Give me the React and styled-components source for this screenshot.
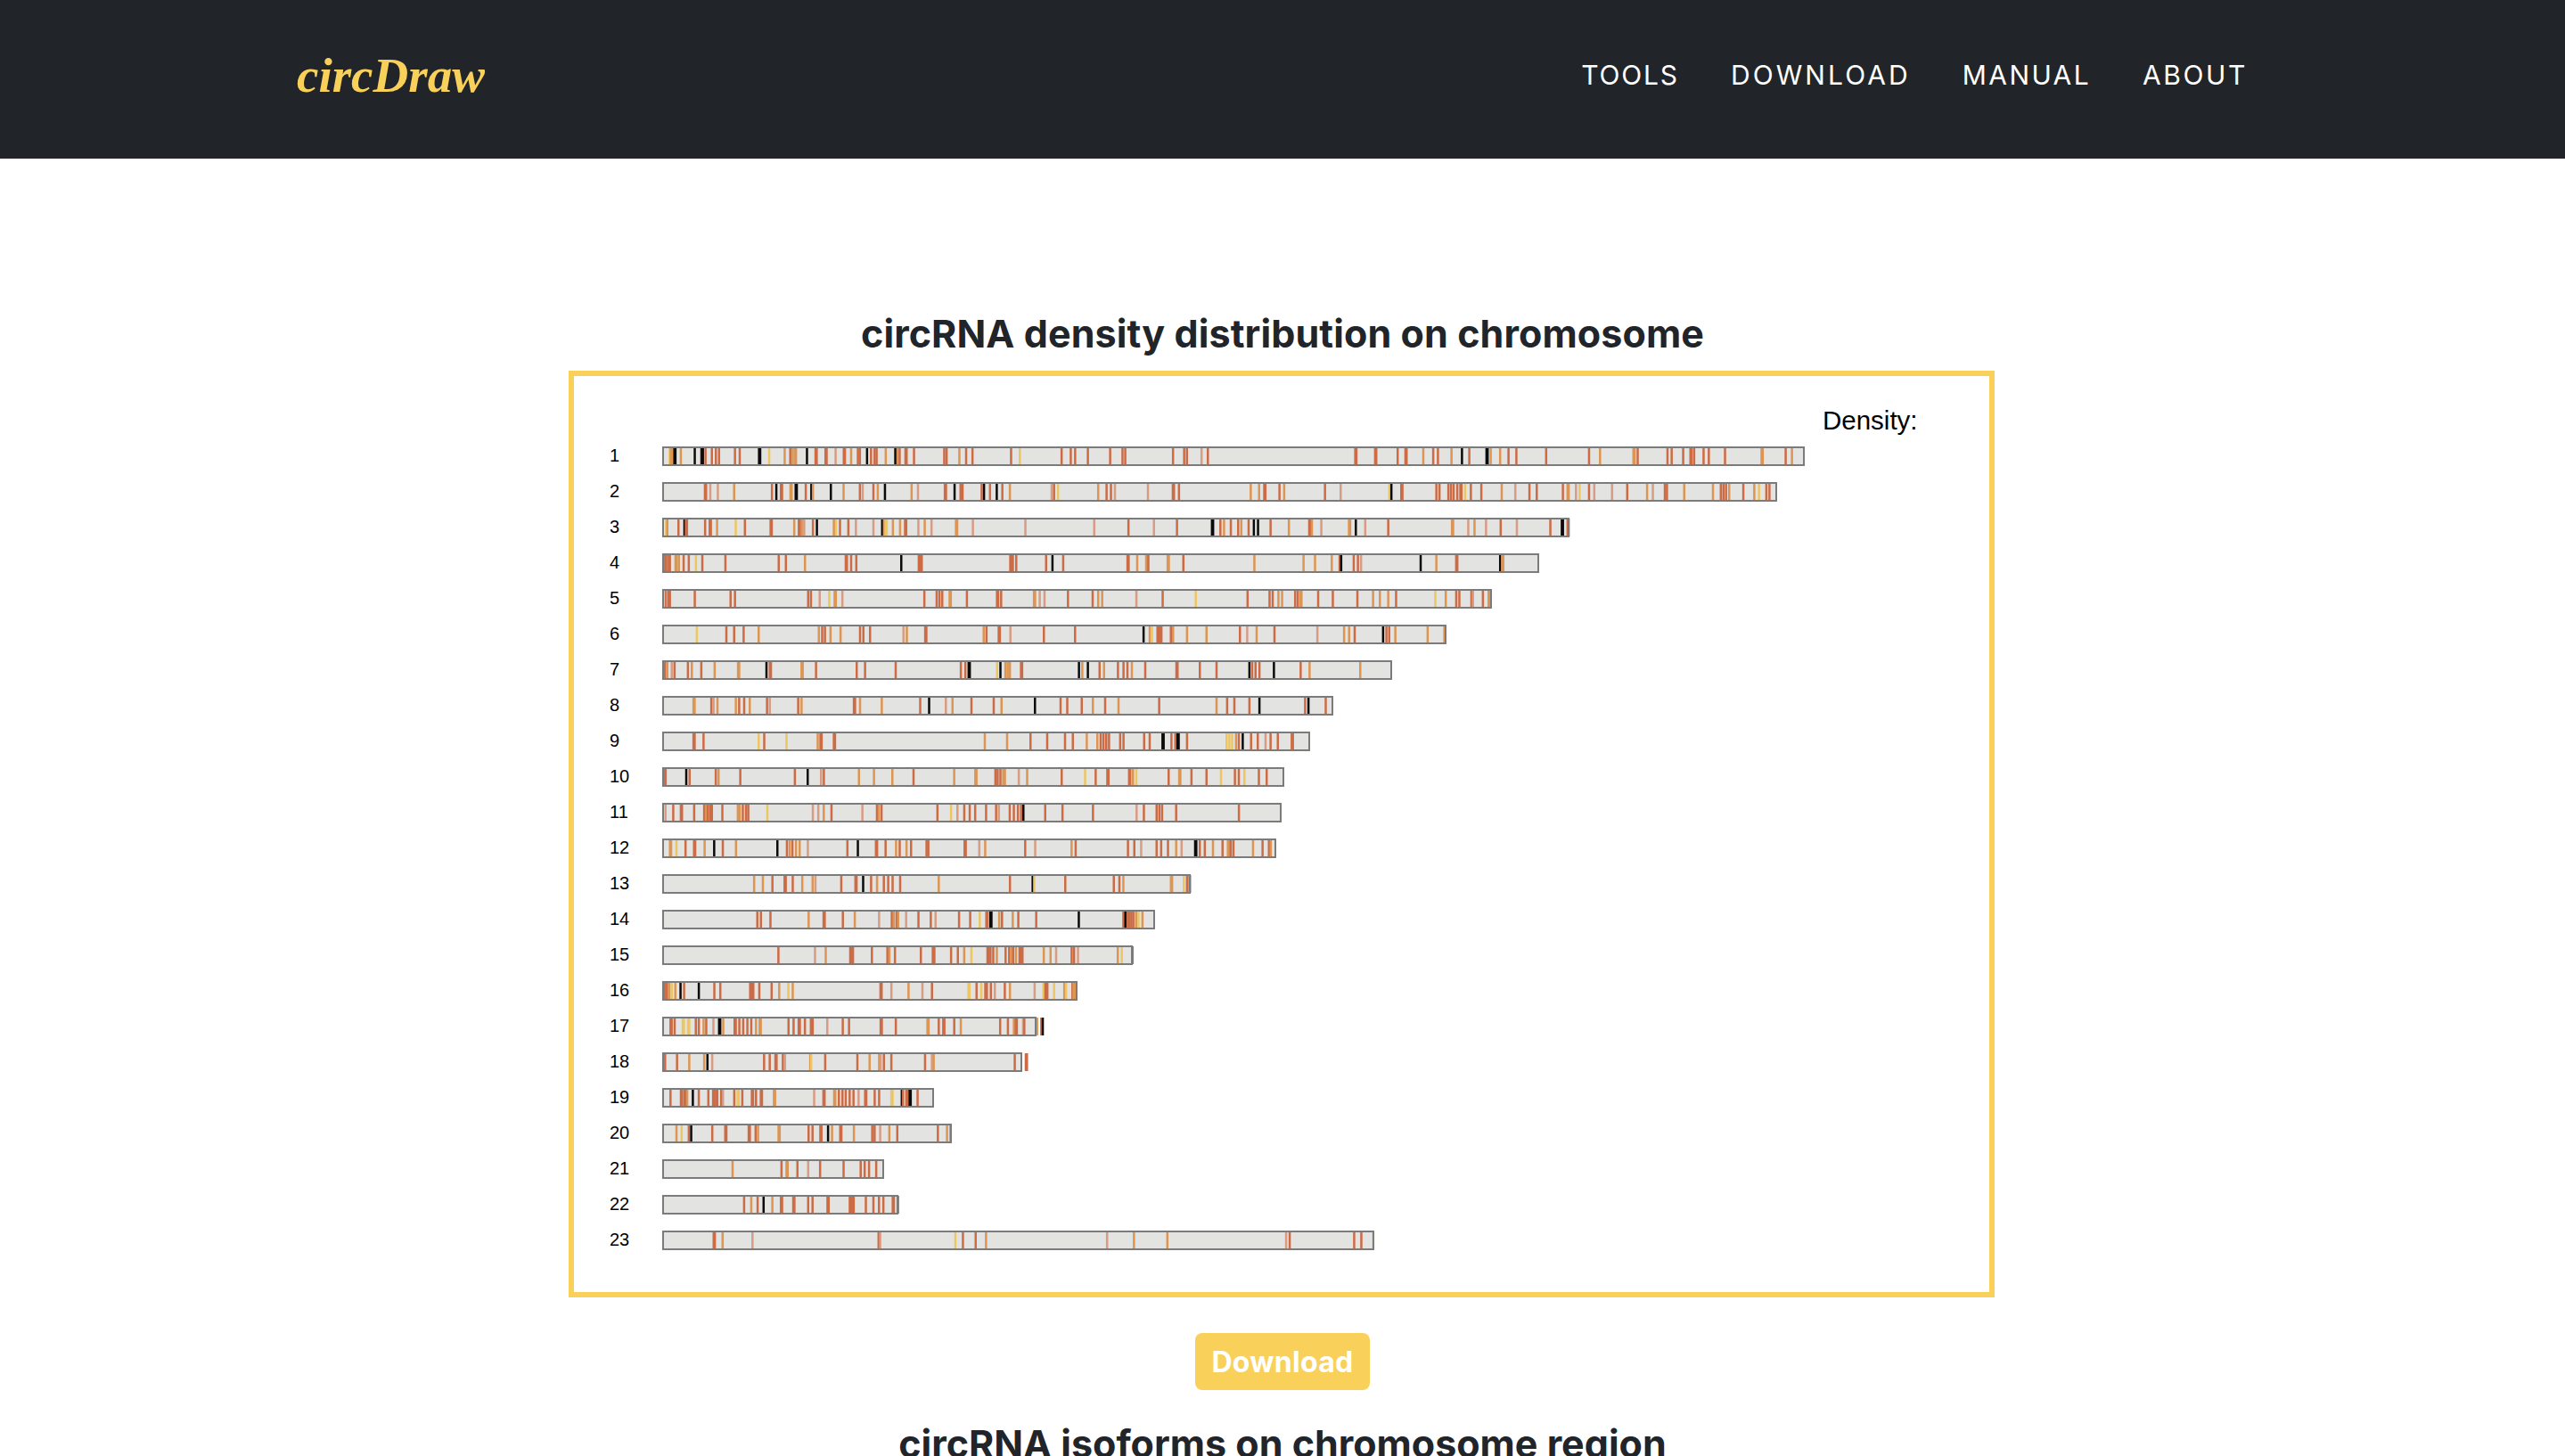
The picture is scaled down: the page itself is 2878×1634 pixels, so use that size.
import React from "react";
import styled, { createGlobalStyle } from "styled-components";

const GlobalStyle = createGlobalStyle`
  html, body { margin: 0; padding: 0; background: #fff; overflow: hidden; height: 100%; }
  #root { height: 100%; }
`;
const Navbar = styled.header`
  height: 178px; box-sizing: border-box; background: #212529;
  display: flex; align-items: center; justify-content: space-between;
  padding: 0 356px 10px 333px;
`;
const Logo = styled.a`
  font-family: "Liberation Serif", serif; font-style: italic; font-weight: 700;
  font-size: 55px; line-height: 1; color: #f9d15a;
`;
const NavLinks = styled.nav`display: flex; gap: 58px;`;
const NavLink = styled.a`
  font-family: "Inter", sans-serif; font-size: 30px; font-weight: 400;
  letter-spacing: ${(p) => p.$track}px; color: #fff; line-height: 36px;
`;
const Main = styled.main`
  display: flex; flex-direction: column; align-items: center; padding-top: 170px;
`;
const SectionTitle = styled.h2`
  margin: 0; font-family: "Inter", sans-serif; font-weight: 700; font-size: 43px;
  letter-spacing: 0.1px; line-height: 52px; color: #212529; text-align: center;
`;
const ChartFrame = styled.section`
  width: 1600px; height: 1040px; box-sizing: border-box; border: 6px solid #f9d15a;
  margin-top: 16px; transform: translateX(-1px);
`;
const ChartSvg = styled.svg`display: block; width: 1588px; height: 1028px;`;
const ChromBar = styled.rect`fill: #e3e3e1;`;
const ChromOutline = styled.rect`fill: none; stroke: #7b7b7b; stroke-width: 2;`;
const COLORS = { r: "#cd6b45", o: "#dd9553", y: "#edc664", k: "#0a0a0a", p: "#d89c84" };
const Tick = styled.rect`fill: ${(p) => COLORS[p.$kind]};`;
const ChromLabel = styled.text`
  font-family: "Liberation Sans", Arial, sans-serif; font-size: 20px; fill: #000;
`;
const LegendLabel = styled.text`
  font-family: "Liberation Sans", Arial, sans-serif; font-size: 29.5px; fill: #000;
`;
const DownloadButton = styled.button`
  margin-top: 40px; width: 196px; height: 64px; border: 0; border-radius: 8px;
  background: #f9d15a; color: #fff; font-family: "Inter", sans-serif;
  font-weight: 700; font-size: 32px; letter-spacing: 0.3px; padding: 0;
`;
const SecondTitle = styled(SectionTitle)`margin-top: 34px; letter-spacing: 0;`;

const Z3 = [630, 2.24], Z4 = [1330, 1568 / 920], Z8 = [660, 1.6], Z9 = [660, 1.96],
  Z10 = [660, 2.24], Z11 = [660, 2.99], Z5 = [630, 2.24], Z6 = [1200, 1568 / 1050];

// ticks: colour letter + position in the crop; upper case letter = wide stroke
const ROWS = [
  [2025, [Z3, "y272 O276 K285 o300 k335 r351 K354 r362 r378 r388 r396 r436 r448 K498 y522 o561 r575 o581 O588 k617 R640 R665 p689 R711 o728 r745 r750 k768 r778 r787 r792 o815 k839 o845 r850 R866 r886 r962 r968 o1000 r1017 r1033 r1130 y1152 r1257 r1280 r1291 r1323 r1379 r1410 r1417 r1537 r1565"],
    [Z4, "r3 p31 r43 R326 R364 r406 R422 o455 r474 r483 o509 k529 r543 K577 o584 o602 r618 r633 r690 r772 o793 O858 r865 r922 r930 r952 R967 r973 r991 r1001 r1032 O1103 r1148 o1160"]],
  [1994, [Z3, "R362 p374 p393 o434 r529 k540 R553 O577 K590 r614 k628 o632 k677 o709 r750 p757 r784 o795 k813 o880 p896 R965 k988 r1003 r1008 r1056 k1062 r1077 k1094 r1108 o1127 p1232 r1238 y1248 o1349 r1370 r1381 p1391 p1474 R1538 r1552"],
    [Z4, "o125 o141 R152 r180 o189 r267 p297 y390 k394 R414 r480 r486 r503 r508 r513 r520 R527 y535 r546 r566 o605 p631 r658 r672 r722 O732 p747 y754 r772 p782 p816 r845 o883 p894 r917 r921 o954 o1009 r1024 r1029 r1034 o1040 r1067 o1088 y1097 r1111 r1117"]],
  [1761, [Z3, "y263 o266 r294 k309 R314 r361 R374 o391 y438 r461 R527 o585 R598 o604 p610 r632 k642 O686 y690 r700 r721 p740 p784 k806 O812 Y816 o833 o851 R865 p897 o913 p930 O993 p1034 p1166 p1339 r1425 p1489 r1547"],
    [Z4, "K52 r67 o74 r87 r101 o107 r121 k131 k139 r163 o198 R238 o242 p260 O314 k326 p344 r388 O511 p541 o553 p575 r603 p634 r698 K721 R732"]],
  [1727, [Z3, "R262 R271 O288 o295 r307 r320 y338 r354 r412 r546 r564 o612 R716 r728 r741 k854 r898 R904 r1128 R1133 r1143 r1218 k1234 r1261 R1424 o1447 O1471 r1475 O1525 r1563"],
    [Z4, "o132 o226 o248 o280 r295 k298 r322 r330 p336 k450 o480 R519 k602 O607"]],
  [1674, [Z3, "r262 p266 R271 r335 r425 r436 r620 r627 p649 y673 O688 p706 r912 r943 r950 r957 O977 r1019 R1096 r1105 O1189 p1202 p1214 r1273 r1335 o1349 o1359 p1445 r1511"],
    [Z4, "y20 r119 r161 r167 o178 o185 r210 r215 O221 r254 r282 r329 o359 o372 o388 r403 y478 o498 r518 r524 r547 p550 r569 O581"]],
  [1623, [Z8, "y195 r248 r262 r279 o306 o414 r420 r425 o435 o453 r488 r494 r506 p566 o572 R606 o710 r715 R738 p758 r818 r874 k997 o1008 y1012 R1023 R1028 r1046 o1050 o1075 o1110 r1170 p1183 o1200 r1232 p1309 o1357 o1366 r1376 k1427 r1433 r1438 o1449 o1507 o1537"]],
  [1562, [Z8, "r138 o142 p150 r155 r179 o186 r203 o227 O270 k320 R327 O384 r409 r482 r497 r552 r669 r677 K684 y734 k740 o749 o753 o757 R778 k881 o887 k897 r918 o926 r951 r961 r968 o976 r1000 R1057 r1098 r1128 k1187 r1192 r1198 r1205 k1231 r1279 o1295 o1386"]],
  [1496, [Z8, "O190 r221 p225 o232 o265 r271 r280 o290 r321 p326 r377 o383 R478 o488 o527 r596 k612 p642 o654 r688 r728 o742 k802 r848 r860 r886 o906 r928 o952 r1025 o1128 r1147 r1160 r1187 k1205 r1287 k1293 r1324"]],
  [1470, [Z8, "R190 r207 y306 r316 y356 o412 R418 R442 o712 o752 r794 r824 r856 r870 o895 o914 r920 r925 r930 r935 r955 r961 r998 r1008 K1032 r1047 r1054 K1059 r1075 y1146 y1151 y1156 o1163 r1168 k1175 r1190 r1202 p1216 r1225 r1238 R1264"]],
  [1441, [Z8, "R138 k176 r182 r229 o234 r273 r371 k394 p418 r423 o486 o513 o546 r584 o657 O696 r731 r735 r740 o745 o748 p773 o788 r850 y892 r911 R933 R972 o978 y984 r1042 O1062 r1083 r1110 y1136 r1161 r1168 y1178 r1204 r1218"]],
  [1438, [Z9, "p170 r187 R205 r233 r255 o259 r263 r268 r272 r295 o329 o333 r340 r347 r352 y394 p494 p506 o518 r535 p603 r635 o639 r645 r768 y798 p812 r827 r839 r851 r875 r897 p903 r927 r936 r945 r952 k957 r1005 r1043 r1110 p1206 r1222 r1250 r1256 r1262 r1293 r1431"]],
  [1432, [Z9, "O181 y194 r214 R234 o256 k277 r296 o325 k416 r437 o443 r449 o457 o465 p483 r570 k593 R634 r654 o677 r685 o700 r710 r744 r748 R829 p860 o873 r961 p983 o1063 r1072 r1187 r1201 p1216 r1250 r1260 r1275 o1293 p1305 K1336 r1345 r1356 o1374 r1395 O1408 r1413 r1419 o1462 r1483 r1497 o1501"]],
  [1336, [Z10, "o417 o439 r463 R495 r514 o538 o564 p571 r636 R673 k691 r711 o726 r743 r754 r765 r784 o881 r1060 k1117 y1121 r1199 r1321 r1335 o1345 O1466 y1497 r1505 k1512"]],
  [1296, [Z10, "r425 r434 r458 o554 R593 r640 o670 p731 r763 o768 r775 o779 p799 r830 r861 p873 r932 r960 y984 R1002 K1012 o1033 r1040 o1067 r1081 r1126 k1233 r1345 k1350 r1356 r1360 r1365 r1370 o1377 y1383 o1393"]],
  [1271, [Z10, "r478 p570 o597 R660 R664 r713 r752 o757 r771 r836 r866 r870 r912 r929 o945 y963 R1005 r1011 r1018 o1027 r1049 r1058 o1063 r1068 o1075 r1084 R1090 o1145 o1162 p1176 r1215 r1221 p1231 o1331 y1341 k1367"]],
  [1209, [Z10, "R192 r198 o204 y210 o219 k232 r241 k278 r317 r332 r407 r411 r415 r430 r461 o480 y503 o514 R736 p762 o805 p840 r864 Y957 r976 y988 r998 r1002 r1012 p1022 r1047 o1060 p1122 y1144 r1149 r1154 y1171 O1198 y1201 r1217 O1221"]],
  [1163, [Z11, "R278 r290 Y319 Y337 r361 r371 o387 r396 p420 K441 o453 R493 r507 r520 r534 r547 o563 O577 r672 r689 R708 r727 r747 r753 p802 r854 r875 R983 r1032 O1140 r1176 R1193 r1228 o1250 r1382 r1408 o1428 R1436 p1459 r1463 o1506 r1520 k1525"]],
  [1147, [Z11, "r258 r298 o339 o389 k400 p416 r590 r609 R630 r653 p660 o745 y748 r795 r903 o944 o976 p981 r992 r1017 r1130 p1153 o1159 r1431 R1470"]],
  [1048, [Z11, "r276 R313 R325 o332 k351 r371 r403 R421 R431 r446 p452 r490 Y503 r517 R551 r563 R581 O625 p758 R791 O827 r841 r853 r864 r877 r890 p907 R931 r961 r976 Y1019 k1052 r1056 R1069 K1080 r1105"]],
  [1068, [Z5, "o289 y302 r320 k326 r379 R413 R472 r488 o494 O547 r621 r631 R652 k670 o680 R702 o735 r781 r787 p801 o824 r844 r946 o969 r978"]],
  [992, [Z5, "o430 r553 O567 r593 p620 r650 r709 r752 r762 r773 r791"]],
  [1008, [Z5, "r459 o477 r493 k508 o530 R553 R584 r620 r631 R670 R726 R733 r765 r784 r798 r809 R834 k845"]],
  [1542, [Z5, "R384 o405 p480 r797 p801 y990 r1009 r1041 o1067"], [Z6, "p63 o108 o164 p363 r369 r477 r489 y509"]],
];

const BAR_LEFT = 743, FIRST_TOP = 501, PITCH = 40;

function Chromosome({ index, end, segments }) {
  const top = FIRST_TOP + index * PITCH;
  const ticks = segments.flatMap(([[x0, s], tokens]) =>
    tokens.split(" ").map((t) => {
      const kind = t[0].toLowerCase();
      const wide = t[0] !== t[0].toLowerCase();
      const w = wide ? 3.8 : 2.5;
      return { kind, w, x: x0 + Number(t.slice(1)) / s - w / 2 };
    })
  );
  return (
    <g>
      <ChromLabel x="684" y={top + 17}>{index + 1}</ChromLabel>
      <ChromBar x={BAR_LEFT} y={top} width={end - BAR_LEFT} height="22" />
      {ticks.map((t, i) => (
        <Tick key={i} $kind={t.kind} x={t.x} y={top + 1} width={t.w} height="20" />
      ))}
      <ChromOutline x={BAR_LEFT + 1} y={top + 1} width={end - BAR_LEFT - 2} height="20" />
    </g>
  );
}

export default function App() {
  return (
    <>
      <GlobalStyle />
      <Navbar>
        <Logo>circDraw</Logo>
        <NavLinks>
          <NavLink $track={1.8}>TOOLS</NavLink>
          <NavLink $track={3.1}>DOWNLOAD</NavLink>
          <NavLink $track={2.4}>MANUAL</NavLink>
          <NavLink $track={2.6}>ABOUT</NavLink>
        </NavLinks>
      </Navbar>
      <Main>
        <SectionTitle>circRNA density distribution on chromosome</SectionTitle>
        <ChartFrame>
          <ChartSvg viewBox="644 422 1588 1028">
            <LegendLabel x="2045" y="482">Density:</LegendLabel>
            {ROWS.map(([end, ...segments], i) => (
              <Chromosome key={i} index={i} end={end} segments={segments} />
            ))}
          </ChartSvg>
        </ChartFrame>
        <DownloadButton>Download</DownloadButton>
        <SecondTitle>circRNA isoforms on chromosome region</SecondTitle>
      </Main>
    </>
  );
}
